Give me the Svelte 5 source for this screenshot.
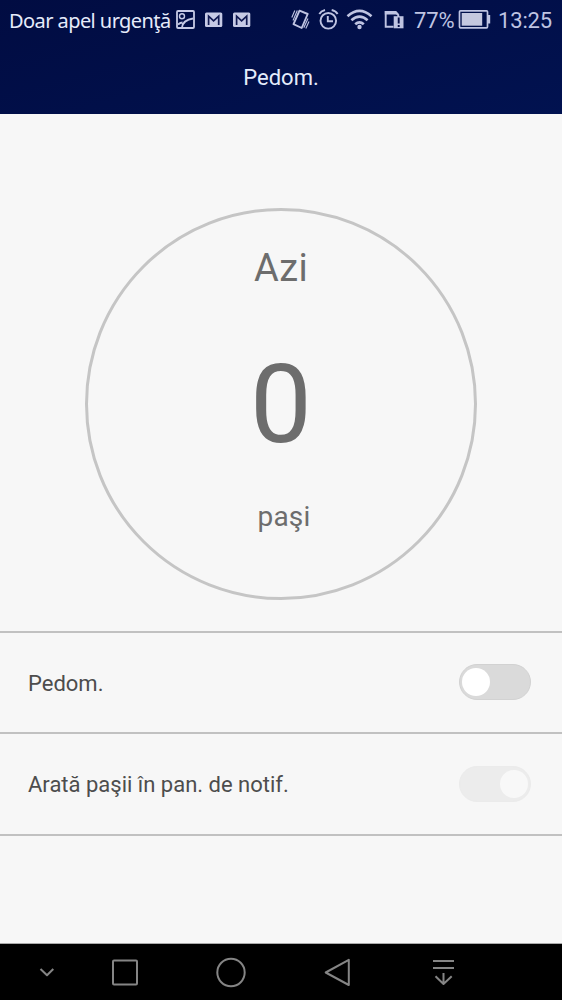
<script>
  export let steps = 0;
  export let battery = 77;
  export let time = '13:25';

  let settings = [
    { id: 'pedometer', label: 'Pedom.', on: false, disabled: false },
    { id: 'notification', label: 'Arată paşii în pan. de notif.', on: true, disabled: true }
  ];

  const toggle = index => {
    settings[index].on = !settings[index].on;
  };
</script>

<style>
  :global(body) {
    margin: 0;
  }
  .screen {
    display: flex;
    flex-direction: column;
    width: 562px;
    height: 1000px;
    overflow: hidden;
    background: #f7f7f7;
    font-family: Roboto, 'Noto Sans', sans-serif;
  }
  svg {
    display: block;
    flex: none;
  }
  .header {
    height: 114px;
    background: linear-gradient(165deg, #010c42, #011250);
  }
  .status {
    display: flex;
    align-items: center;
    height: 40px;
    color: #bfc4e2;
    font-size: 22px;
    white-space: nowrap;
  }
  .status__carrier {
    width: 166px;
    padding-left: 9px;
    color: #e6ebfb;
    font-family: 'Noto Sans', sans-serif;
    font-size: 20px;
    letter-spacing: -0.57px;
  }
  .status__icons {
    display: flex;
    width: 112px;
  }
  .status__battery {
    width: 44px;
    padding-left: 3px;
    letter-spacing: -0.1px;
  }
  .status__time {
    padding-left: 6px;
    letter-spacing: -0.15px;
  }
  .title {
    margin: 0;
    height: 74px;
    line-height: 76px;
    text-align: center;
    color: #e4ecfb;
    font-size: 22px;
    font-weight: 400;
  }
  .counter {
    display: flex;
    flex-direction: column;
    align-items: center;
    box-sizing: border-box;
    width: 392px;
    height: 392px;
    margin: 93.5px auto 31px 85px;
    border: 3px solid #c5c5c5;
    border-radius: 50%;
    color: #6d6d6d;
    text-align: center;
  }
  .counter__day {
    height: 98px;
    padding-top: 33px;
    line-height: 48px;
    font-size: 38px;
    letter-spacing: 0.3px;
  }
  .counter__steps {
    height: 110px;
    line-height: 125px;
    font-size: 110px;
  }
  .counter__unit {
    padding: 45px 0 0 6px;
    line-height: 40px;
    font-size: 28px;
    letter-spacing: 0.2px;
  }
  .row {
    display: flex;
    align-items: center;
    justify-content: space-between;
    box-sizing: border-box;
    height: 101.5px;
    padding: 0 31px 0 28px;
    border-top: 2px solid #c1c1c1;
    color: #4d4d4d;
    font-size: 22px;
  }
  .row:last-child {
    height: 103.5px;
    border-bottom: 2px solid #c1c1c1;
  }
  .row__label {
    padding-top: 2px;
  }
  .switch {
    box-sizing: border-box;
    width: 72px;
    height: 36px;
    padding: 3px 2px;
    border: 1px solid #d2d2d2;
    border-radius: 18px;
    background: #dadada;
  }
  .switch__knob {
    display: block;
    width: 28px;
    height: 28px;
    border-radius: 50%;
    background: #fff;
  }
  .switch.on .switch__knob {
    margin-left: 38px;
  }
  .switch:disabled {
    border-color: #ebebeb;
    background: #ececec;
  }
  .switch:disabled .switch__knob {
    background: #f8f8f8;
  }
  .nav {
    height: 56px;
    margin-top: auto;
    border-top: 1px solid #aaa;
    background: #000;
  }
</style>

<div class="screen">
  <header class="header">
    <div class="status">
      <span class="status__carrier">Doar apel urgenţă</span>
      <div class="status__icons">
        <svg width="112" height="40" viewBox="175 0 112 40" fill="none" stroke="#c6cae5">
          <rect x="177" y="11" width="17" height="17" rx="1" stroke-width="1.8" />
          <circle cx="182" cy="16.3" r="2.5" stroke-width="1.4" />
          <path d="M178 24.5Q180.5 22.5 182.5 22.5 M182 27.5Q183 20 193 18.5" stroke-width="1.8" />
          {#each [205, 233] as x}
            <g transform="translate({x} 12.5)">
              <rect width="17.3" height="14.5" rx="1.5" fill="#c6cae5" stroke="none" />
              <path d="M3.6 12.5V3.7L8.6 8.3L13.7 3.7V12.5" stroke="#101951" stroke-width="1.7" />
            </g>
          {/each}
        </svg>
      </div>
      <svg width="124" height="40" viewBox="287 0 124 40" fill="none" stroke="#bfc4e2">
        <!-- vibrate -->
        <path d="M299.5 10.7L307.7 14L301.7 28L293.5 24.2Z" stroke-width="1.9" stroke-linejoin="round" />
        <path d="M294.8 10.5L291.8 17.5 M297.3 10.5L293 20.5 M309 21.5L305.8 28.5 M308 18.5L303.8 27.8" stroke-width="1.1" />
        <!-- alarm -->
        <circle cx="328.3" cy="20.8" r="7.8" stroke-width="1.9" />
        <path d="M327.8 16V21.3H333 M319.3 14Q321 11 325 10 M331.7 10Q336 11 337.6 14" stroke-width="1.9" />
        <!-- wifi -->
        <path d="M347.5 16.2Q359.5 5.5 371.5 16.2 M351.4 20.3Q359.5 13 367.6 20.3 M355.2 24.3Q359.5 20.3 363.8 24.3" stroke-width="2.6" />
        <circle cx="359.5" cy="27" r="2.2" fill="#bfc4e2" stroke="none" />
        <!-- sd card warning -->
        <path d="M393.5 26.7H385.7V12H395.5L398.3 15V17" stroke-width="1.9" />
        <path d="M384.8 11H396L399.3 14.5H384.8Z" fill="#bfc4e2" stroke="none" />
        <path d="M393.7 16.2H403.5V28.3H393.7Z" fill="#bfc4e2" stroke="none" />
        <path d="M398.7 17.5V23.5 M398.7 25V27" stroke="#020b43" stroke-width="1.9" />
      </svg>
      <span class="status__battery">{battery}%</span>
      <svg width="34" height="40" viewBox="458 0 34 40" fill="none" stroke="#bfc4e2">
        <rect x="459.5" y="10.8" width="28" height="17" rx="1" stroke-width="1.7" />
        <rect x="461.7" y="13" width="20.5" height="12.7" fill="#c5c8df" stroke="none" />
        <path d="M489 15V23.5" stroke-width="2.4" />
      </svg>
      <span class="status__time">{time}</span>
    </div>
    <h1 class="title">Pedom.</h1>
  </header>

  <div class="counter">
    <span class="counter__day">Azi</span>
    <span class="counter__steps">{steps}</span>
    <span class="counter__unit">paşi</span>
  </div>

  <div class="settings">
    {#each settings as item, i (item.id)}
      <div class="row">
        <span class="row__label">{item.label}</span>
        <button
          type="button"
          class="switch"
          class:on={item.on}
          disabled={item.disabled}
          aria-label={item.label}
          aria-pressed={item.on}
          on:click={() => toggle(i)}>
          <span class="switch__knob"></span>
        </button>
      </div>
    {/each}
  </div>

  <nav class="nav">
    <svg width="562" height="56" viewBox="0 944 562 56" fill="none" stroke="#858585" stroke-width="2" stroke-linejoin="round">
      <path d="M40.5 969L47 975.3L53.3 969" />
      <rect x="113" y="960.5" width="24" height="24" rx="1" />
      <circle cx="231" cy="972.5" r="13.7" />
      <path d="M348.8 959.8V985L325.7 972.5Z" />
      <path d="M433 961H454 M433 968H454 M443.5 973V984 M435.5 976.3L443.5 984L451.7 976.3" />
    </svg>
  </nav>
</div>
